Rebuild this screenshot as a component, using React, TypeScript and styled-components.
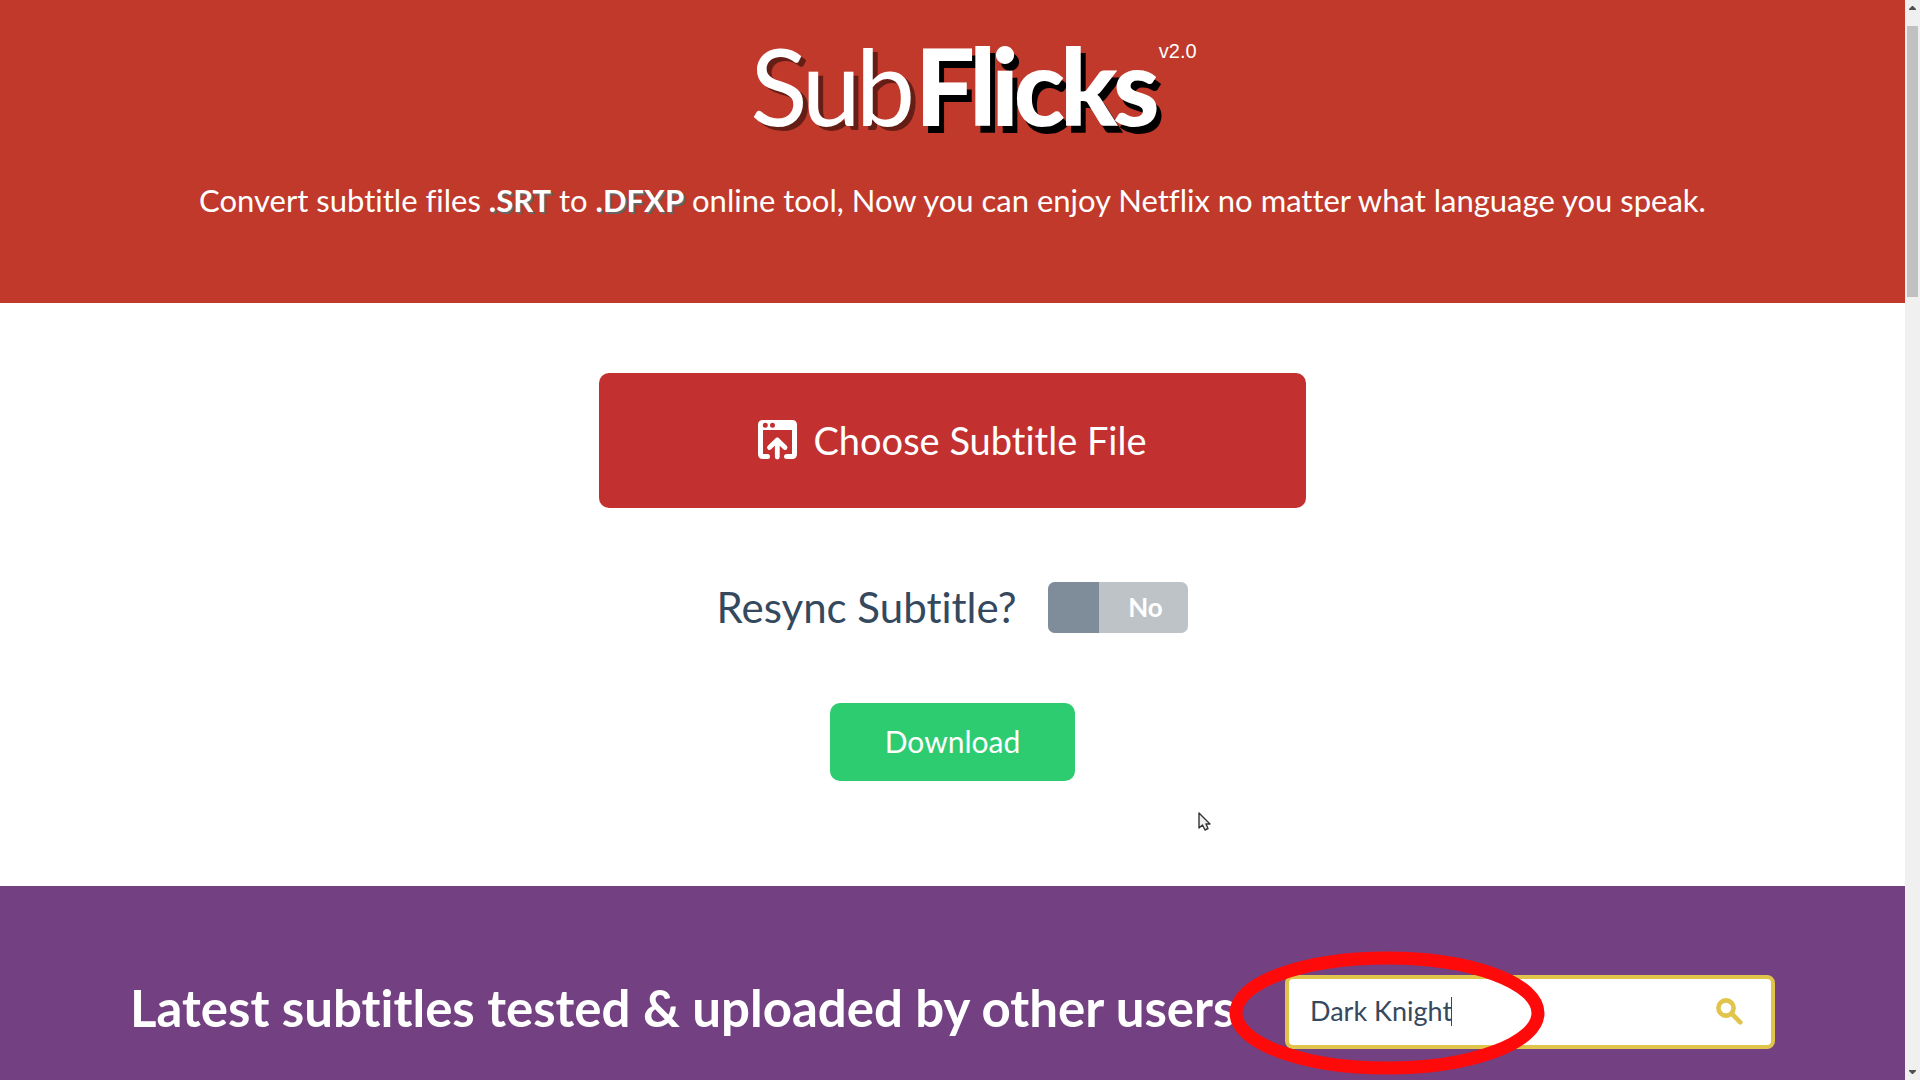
import React, { useState } from "react";
import styled, { createGlobalStyle } from "styled-components";

const GlobalStyle = createGlobalStyle`
  *, *::before, *::after { box-sizing: border-box; }
  body {
    margin: 0;
    background: #ffffff;
    color: #34495e;
    font-family: Lato, "Liberation Sans", sans-serif;
    font-variant-ligatures: none;
  }
  button, input { font: inherit; font-variant-ligatures: none; }
`;

const Shell = styled.div`
  display: grid;
  grid-template-columns: minmax(0, 1fr) 15px;
  min-height: 100vh;
`;

const Page = styled.main`
  display: flex;
  flex-direction: column;
`;

const Hero = styled.header`
  display: flex;
  flex-direction: column;
  align-items: center;
  padding: 21px 24px 79px;
  background: #c0392b;
  color: #ffffff;
`;

const Logo = styled.h1`
  position: relative;
  margin: 0;
  font-size: 106px;
  font-weight: 400;
  line-height: 128px;
  letter-spacing: -5px;
  text-shadow: 5px 4px 0 #641e16;
`;

const LogoStrong = styled.span`
  margin-left: 5px;
  font-family: "Lato Black", Lato, "Liberation Sans", sans-serif;
  font-weight: 900;
  text-shadow: 5px 7px 0 #000000;
`;

const Version = styled.small`
  position: absolute;
  left: 100%;
  top: 18px;
  padding-left: 4px;
  font-family: "Liberation Sans", Arial, sans-serif;
  font-size: 20px;
  line-height: 24px;
  letter-spacing: normal;
  text-shadow: none;
`;

const Tagline = styled.p`
  margin: 27px 0 0;
  font-size: 31px;
  line-height: 48px;
  text-align: center;
`;

const Format = styled.strong`
  font-weight: 700;
  text-shadow: 2px 2px 0 #666666;
`;

const Converter = styled.section`
  position: relative;
  display: flex;
  flex-direction: column;
  align-items: center;
  padding: 70px 24px 105px;
`;

const ActionButton = styled.button`
  display: flex;
  align-items: center;
  justify-content: center;
  border: 0;
  border-radius: 10px;
  color: #ffffff;
  cursor: pointer;
`;

const ChooseButton = styled(ActionButton)`
  gap: 16px;
  width: 707px;
  max-width: 100%;
  padding: 43px 24px 44px;
  background: #c23030;
  font-size: 38px;
  line-height: 48px;
`;

const DownloadButton = styled(ActionButton)`
  padding: 16px 55px 18px;
  background: #2ecc71;
  font-size: 30px;
  line-height: 44px;
`;

const ResyncRow = styled.div`
  display: flex;
  align-items: center;
  gap: 32px;
  margin: 74px 0 70px;
`;

const ResyncLabel = styled.label`
  font-size: 42px;
  line-height: 51px;
`;

const Switch = styled.span<{ $on: boolean }>`
  display: flex;
  flex-direction: ${(p) => (p.$on ? "row-reverse" : "row")};
  position: relative;
  width: 140px;
  height: 51px;
  overflow: hidden;
  border-radius: 7px;
  background: ${(p) => (p.$on ? "#2ecc71" : "#bdc3c7")};
`;

const SwitchInput = styled.input`
  position: absolute;
  inset: 0;
  width: 100%;
  height: 100%;
  margin: 0;
  opacity: 0;
  cursor: pointer;
`;

const SwitchKnob = styled.span`
  width: 51px;
  background: #7f8c9a;
`;

const SwitchText = styled.span`
  flex: 1;
  padding-left: 3px;
  color: #ffffff;
  font-size: 26px;
  font-weight: 700;
  line-height: 51px;
  text-align: center;
`;

const Pointer = styled.svg`
  position: absolute;
  left: calc(50% + 245px);
  bottom: 54px;
`;

const Latest = styled.section`
  flex: 1;
  padding: 89px 24px 31px;
  background: #734182;
`;

const LatestBar = styled.div`
  display: flex;
  align-items: flex-start;
  justify-content: space-between;
  gap: 24px;
  max-width: 1645px;
  margin: 0 auto;
`;

const LatestTitle = styled.h2`
  margin: 0;
  color: #ffffff;
  font-size: 51px;
  font-weight: 700;
  line-height: 66px;
`;

const SearchBox = styled.form`
  position: relative;
  display: flex;
  align-items: center;
  flex: 0 0 490px;
  height: 74px;
  padding: 0 28px 0 21px;
  border: 4px solid #e0c44c;
  border-radius: 8px;
  background: #ffffff;
`;

const SearchInput = styled.input`
  flex: 1;
  min-width: 0;
  height: 100%;
  padding: 0 0 4px;
  border: 0;
  outline: 0;
  background: transparent;
  color: #34495e;
  font-size: 27px;
`;

const SearchButton = styled.button`
  display: flex;
  padding: 0 0 2px;
  border: 0;
  background: transparent;
  cursor: pointer;
`;

const Caret = styled.span`
  position: absolute;
  left: 162px;
  top: 18px;
  width: 1px;
  height: 29px;
  background: #34495e;
`;

const Highlight = styled.svg`
  position: absolute;
  left: -61px;
  top: -30px;
  pointer-events: none;
`;

const ScrollRail = styled.div`
  display: flex;
  flex-direction: column;
  align-items: center;
  justify-content: space-between;
  background: #f0f0f0;
`;

const ScrollTop = styled.div`
  display: flex;
  flex-direction: column;
  align-items: center;
`;

const RailArrow = styled.svg`
  display: block;
  margin: 6px 0;
`;

const Thumb = styled.div`
  width: 11px;
  height: 271px;
  margin-top: 10px;
  background: #c1c1c1;
`;

function UploadIcon() {
  return (
    <svg width="39" height="40" viewBox="0 0 39 40" aria-hidden="true">
      <path
        fill="#fff"
        fillRule="evenodd"
        d="M5 0H34Q39 0 39 5V34Q39 39 34 39H29Q26 39 26 36.500Q26 34 29 34H34V10H5V34H10Q12 34 12 36.500Q12 39 10 39H5Q0 39 0 34V5Q0 0 5 0Z
           M7.300 2.800a2.500 2.500 0 1 0 0 5a2.500 2.500 0 1 0 0-5Z
           M14.500 2.800a2.500 2.500 0 1 0 0 5a2.500 2.500 0 1 0 0-5Z"
      />
      <path
        d="M19.300 37V20M11.500 27.500L19.300 20L27 27.500"
        fill="none"
        stroke="#fff"
        strokeWidth="4.800"
        strokeLinecap="round"
        strokeLinejoin="round"
      />
    </svg>
  );
}

function SearchIcon() {
  return (
    <svg width="27" height="27" viewBox="0 0 27 27" aria-hidden="true">
      <circle cx="10" cy="10" r="7.600" fill="none" stroke="#e0c44c" strokeWidth="4.600" />
      <path d="M16 16L24.300 24.300" stroke="#e0c44c" strokeWidth="4.600" strokeLinecap="round" />
    </svg>
  );
}

export default function App() {
  const [resync, setResync] = useState(false);
  const [query, setQuery] = useState("Dark Knight");

  return (
    <>
      <GlobalStyle />
      <Shell>
        <Page>
          <Hero>
            <Logo>
              Sub<LogoStrong>Flicks</LogoStrong>
              <Version>v2.0</Version>
            </Logo>
            <Tagline>
              Convert subtitle files <Format>.SRT</Format> to <Format>.DFXP</Format> online tool, Now
              you can enjoy Netflix no matter what language you speak.
            </Tagline>
          </Hero>

          <Converter>
            <ChooseButton type="button">
              <UploadIcon />
              Choose Subtitle File
            </ChooseButton>
            <ResyncRow>
              <ResyncLabel htmlFor="resync">Resync Subtitle?</ResyncLabel>
              <Switch $on={resync}>
                <SwitchKnob />
                <SwitchText>{resync ? "Yes" : "No"}</SwitchText>
                <SwitchInput
                  id="resync"
                  type="checkbox"
                  checked={resync}
                  onChange={(e) => setResync(e.target.checked)}
                />
              </Switch>
            </ResyncRow>
            <DownloadButton type="button">Download</DownloadButton>
            <Pointer width="13" height="20" viewBox="0 0 13 20" aria-hidden="true">
              <path
                d="M1 1V16L4.500 13L7 18L10 16.500L8 12H12Z"
                fill="#eeeeee"
                stroke="#333333"
                strokeWidth="1.400"
                strokeLinejoin="round"
              />
            </Pointer>
          </Converter>

          <Latest>
            <LatestBar>
              <LatestTitle>Latest subtitles tested &amp; uploaded by other users</LatestTitle>
              <SearchBox role="search" onSubmit={(e) => e.preventDefault()}>
                <SearchInput
                  type="text"
                  aria-label="Search subtitles"
                  value={query}
                  onChange={(e) => setQuery(e.target.value)}
                />
                <Caret />
                <SearchButton type="submit" aria-label="Search">
                  <SearchIcon />
                </SearchButton>
                <Highlight width="318" height="128" viewBox="0 0 318 128" aria-hidden="true">
                  <ellipse cx="159" cy="64" rx="151" ry="55" fill="none" stroke="#ff0a0a" strokeWidth="13" />
                </Highlight>
              </SearchBox>
            </LatestBar>
          </Latest>
        </Page>

        <ScrollRail aria-hidden="true">
          <ScrollTop>
            <RailArrow width="7" height="4" viewBox="0 0 7 4">
              <path d="M0 4V3L3 0H4L7 3V4Z" fill="#505050" />
            </RailArrow>
            <Thumb />
          </ScrollTop>
          <RailArrow width="7" height="4" viewBox="0 0 7 4">
            <path d="M0 0V1L3 4H4L7 1V0Z" fill="#505050" />
          </RailArrow>
        </ScrollRail>
      </Shell>
    </>
  );
}
